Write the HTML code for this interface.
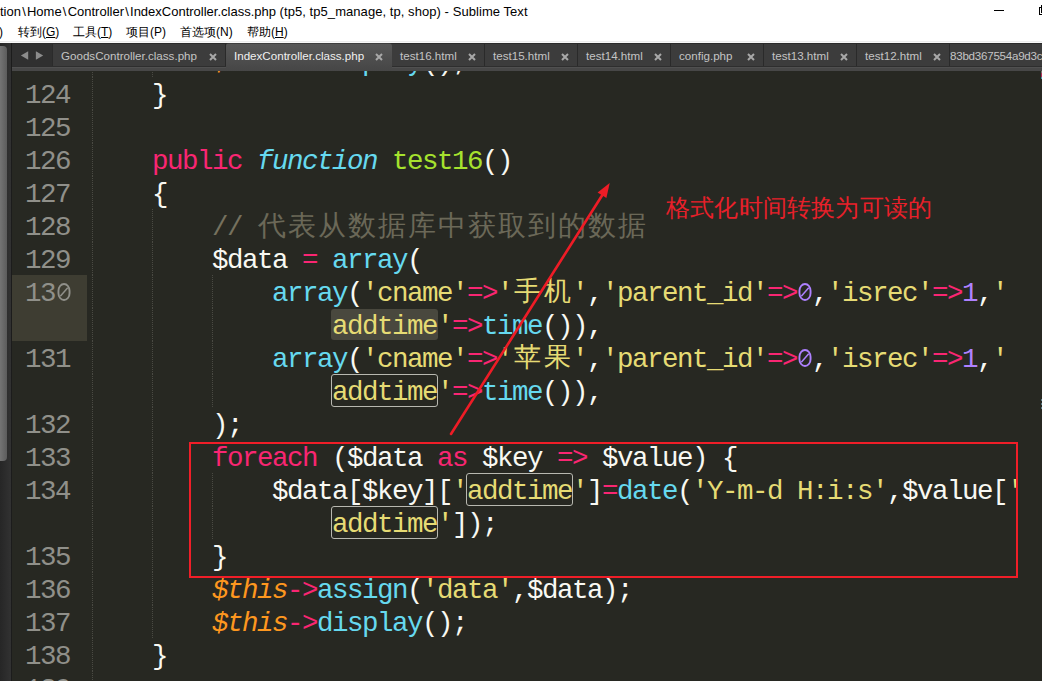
<!DOCTYPE html>
<html><head><meta charset="utf-8">
<style>
html,body{margin:0;padding:0;}
body{width:1042px;height:681px;overflow:hidden;position:relative;background:#fff;font-family:"Liberation Sans",sans-serif;}
.title{position:absolute;top:3px;font-size:13px;color:#000;white-space:pre;line-height:18px;}
.bs{font-weight:normal;padding:0 1.2px;}
.menu{position:absolute;top:23px;font-size:12px;color:#000;white-space:pre;line-height:18px;}
.menu u{text-decoration:underline;}
.wmin{position:absolute;left:994px;top:10px;width:10px;height:1px;background:#000;}
.wmax{position:absolute;left:1039px;top:7px;width:9px;height:8px;border:1px solid #000;box-sizing:border-box;}
.wmax2{position:absolute;left:1041px;top:5px;width:9px;height:8px;border-top:1px solid #000;border-left:1px solid #000;box-sizing:border-box;}
.topline{position:absolute;left:0;top:41px;width:1042px;height:2px;background:linear-gradient(180deg,#ececec 0,#ececec 1px,#f8f8f8 1px);}
.side{position:absolute;left:0;top:43px;width:12px;height:638px;background:linear-gradient(90deg,#262626,#333);}
.sideline{position:absolute;left:11px;top:43px;width:1px;height:638px;background:#1c1c1c;}
.thumb{position:absolute;left:0;top:46px;width:7px;height:415px;background:linear-gradient(90deg,#747474,#5c5c5c);border-radius:0 4px 4px 0;}
.tabbar{position:absolute;left:12px;top:43px;width:1030px;height:23px;background:#2b2b2b;}
.strip{position:absolute;left:12px;top:66px;width:1030px;height:5px;background:linear-gradient(180deg,#2e2e2e 0,#2e2e2e 1px,#505050 1px,#505050 2px,#474747 2px);}
.arrows{position:absolute;left:12px;top:44px;width:40px;height:22px;background:#303030;}
.tab{position:absolute;top:44px;height:22px;background:#3c3c3c;box-sizing:border-box;border-right:1px solid #2a2a2a;font-size:11.6px;color:#c4c4c4;white-space:nowrap;overflow:hidden;}
.tab.act{background:linear-gradient(180deg,#3e3e3e 0,#3e3e3e 1px,#575757 1px,#464646);top:43px;height:28px;color:#f0f0f0;border-right:none;border-radius:3px 3px 0 0;z-index:2;}
.tab.act .tl{top:6px;} .tab.act .x{top:9.5px;right:9.5px;}
.tl{position:absolute;left:8px;top:5px;line-height:14px;}
.x{position:absolute;right:8px;top:8.5px;}
.editor{position:absolute;left:12px;top:71px;width:1030px;height:610px;background:#272822;overflow:hidden;}
.ed{position:absolute;left:-12px;top:-71px;width:1042px;height:681px;}
.gh{position:absolute;left:12px;top:275px;width:75px;height:66px;background:#3e3d32;}
.ln{position:absolute;left:12px;width:58px;text-align:right;font-family:"Liberation Mono",monospace;font-size:27.5px;letter-spacing:-1.5px;line-height:33px;color:#90908a;white-space:pre;}
.gd{position:absolute;width:1px;height:33px;background:repeating-linear-gradient(180deg,#4a4a43 0,#4a4a43 1px,transparent 1px,transparent 2px);}
.t{position:absolute;font-family:"Liberation Mono",monospace;font-size:27.5px;letter-spacing:-1.5px;line-height:33px;white-space:pre;}
.cj{position:absolute;font-size:27px;line-height:33px;text-align:center;white-space:pre;margin-top:-2px;font-weight:300;}
.cj.c{font-family:"Liberation Serif",serif;font-size:28px;font-weight:400;color:#6b6858;}
.k{color:#f92672;} .f{color:#66d9ef;} .fi{color:#66d9ef;font-style:italic;} .g{color:#a6e22e;}
.s{color:#e6db74;} .n{color:#ae81ff;} .w{color:#f8f8f2;} .c{color:#75715e;} .o{color:#fd971f;font-style:italic;}
.z{position:absolute;}
.sel{position:absolute;height:31px;background:#49483e;border-radius:3px;}
.box{position:absolute;height:33px;border:1px solid #b8b8b0;border-radius:3px;box-sizing:border-box;}
.anno{position:absolute;left:666px;top:194px;font-size:24px;letter-spacing:0.2px;line-height:28px;color:#e8202a;white-space:pre;}
.rect{position:absolute;left:189px;top:442px;width:829px;height:136px;border:2px solid #f01e28;box-sizing:border-box;}
</style></head><body>
<div class="title" style="left:0px">tion<b class="bs">\</b>Home<b class="bs">\</b>Controller<b class="bs">\</b>IndexController.class.php <span style="letter-spacing:0.06px">(tp5, tp5_manage, tp, shop) - Sublime Text</span></div>
<div class="menu" style="left:-1px">)</div>
<div class="menu" style="left:18px">转到(<u>G</u>)</div>
<div class="menu" style="left:73px">工具(<u>T</u>)</div>
<div class="menu" style="left:126px">项目(P)</div>
<div class="menu" style="left:180px">首选项(N)</div>
<div class="menu" style="left:247px">帮助(<u>H</u>)</div>
<div class="wmin"></div><div class="wmax"></div><div class="wmax2"></div>
<div class="topline"></div>
<div class="editor"><div class="ed">
<div class="gh"></div>
<div class="gd" style="left:92px;top:44px"></div>
<div class="gd" style="left:152px;top:44px"></div>
<div class="ln" style="top:46px">123</div>
<span class="t o" style="left:212.0px;top:46px">$this</span>
<span class="t k" style="left:287.0px;top:46px">-&gt;</span>
<span class="t f" style="left:317.0px;top:46px">display</span>
<span class="t w" style="left:422.0px;top:46px">();</span>
<div class="gd" style="left:92px;top:77px"></div>
<div class="ln" style="top:79px">124</div>
<span class="t w" style="left:152.0px;top:79px">}</span>
<div class="gd" style="left:92px;top:110px"></div>
<div class="ln" style="top:112px">125</div>
<div class="gd" style="left:92px;top:143px"></div>
<div class="ln" style="top:145px">126</div>
<span class="t k" style="left:152.0px;top:145px">public</span>
<span class="t w" style="left:242.0px;top:145px"> </span>
<span class="t fi" style="left:257.0px;top:145px">function</span>
<span class="t w" style="left:377.0px;top:145px"> </span>
<span class="t g" style="left:392.0px;top:145px">test16</span>
<span class="t w" style="left:482.0px;top:145px">()</span>
<div class="gd" style="left:92px;top:176px"></div>
<div class="ln" style="top:178px">127</div>
<span class="t w" style="left:152.0px;top:178px">{</span>
<div class="gd" style="left:92px;top:209px"></div>
<div class="gd" style="left:152px;top:209px"></div>
<div class="ln" style="top:211px">128</div>
<span class="t c" style="left:212.0px;top:211px">// </span>
<span class="cj c" style="left:257.0px;top:211px;width:30px">代</span>
<span class="cj c" style="left:287.0px;top:211px;width:30px">表</span>
<span class="cj c" style="left:317.0px;top:211px;width:30px">从</span>
<span class="cj c" style="left:347.0px;top:211px;width:30px">数</span>
<span class="cj c" style="left:377.0px;top:211px;width:30px">据</span>
<span class="cj c" style="left:407.0px;top:211px;width:30px">库</span>
<span class="cj c" style="left:437.0px;top:211px;width:30px">中</span>
<span class="cj c" style="left:467.0px;top:211px;width:30px">获</span>
<span class="cj c" style="left:497.0px;top:211px;width:30px">取</span>
<span class="cj c" style="left:527.0px;top:211px;width:30px">到</span>
<span class="cj c" style="left:557.0px;top:211px;width:30px">的</span>
<span class="cj c" style="left:587.0px;top:211px;width:30px">数</span>
<span class="cj c" style="left:617.0px;top:211px;width:30px">据</span>
<div class="gd" style="left:92px;top:242px"></div>
<div class="gd" style="left:152px;top:242px"></div>
<div class="ln" style="top:244px">129</div>
<span class="t w" style="left:212.0px;top:244px">$data </span>
<span class="t k" style="left:302.0px;top:244px">=</span>
<span class="t w" style="left:317.0px;top:244px"> </span>
<span class="t f" style="left:332.0px;top:244px">array</span>
<span class="t w" style="left:407.0px;top:244px">(</span>
<div class="gd" style="left:92px;top:275px"></div>
<div class="gd" style="left:152px;top:275px"></div>
<div class="gd" style="left:212px;top:275px"></div>
<div class="ln" style="top:277px">13 </div>
<svg class="z" style="left:55.70px;top:280.85px" width="16" height="22"><rect x="2.45" y="3" width="11.1" height="16" rx="5.55" ry="6.8" fill="none" stroke="#90908a" stroke-width="1.9"/><line x1="4.3" y1="15.2" x2="11.7" y2="6.8" stroke="#90908a" stroke-width="1.5"/></svg>
<span class="t f" style="left:272.0px;top:277px">array</span>
<span class="t w" style="left:347.0px;top:277px">(</span>
<span class="t s" style="left:362.0px;top:277px">&#x27;cname&#x27;</span>
<span class="t k" style="left:467.0px;top:277px">=&gt;</span>
<span class="t s" style="left:497.0px;top:277px">&#x27;</span>
<span class="cj s" style="left:512.0px;top:277px;width:30px">手</span>
<span class="cj s" style="left:542.0px;top:277px;width:30px">机</span>
<span class="t s" style="left:572.0px;top:277px">&#x27;</span>
<span class="t w" style="left:587.0px;top:277px">,</span>
<span class="t s" style="left:602.0px;top:277px">&#x27;parent_id&#x27;</span>
<span class="t k" style="left:767.0px;top:277px">=&gt;</span>
<svg class="z" style="left:796.70px;top:281.00px" width="16" height="22"><rect x="2.45" y="3" width="11.1" height="16" rx="5.55" ry="6.8" fill="none" stroke="#ae81ff" stroke-width="1.9"/><line x1="4.3" y1="15.2" x2="11.7" y2="6.8" stroke="#ae81ff" stroke-width="1.5"/></svg>
<span class="t w" style="left:812.0px;top:277px">,</span>
<span class="t s" style="left:827.0px;top:277px">&#x27;isrec&#x27;</span>
<span class="t k" style="left:932.0px;top:277px">=&gt;</span>
<span class="t n" style="left:962.0px;top:277px">1</span>
<span class="t w" style="left:977.0px;top:277px">,</span>
<span class="t s" style="left:992.0px;top:277px">&#x27;</span>
<div class="gd" style="left:92px;top:308px"></div>
<div class="gd" style="left:152px;top:308px"></div>
<div class="gd" style="left:212px;top:308px"></div>
<div class="sel" style="left:331.0px;top:309px;width:107.0px"></div>
<span class="t s" style="left:332.0px;top:310px">addtime</span>
<span class="t s" style="left:437.0px;top:310px">&#x27;</span>
<span class="t k" style="left:452.0px;top:310px">=&gt;</span>
<span class="t f" style="left:482.0px;top:310px">time</span>
<span class="t w" style="left:542.0px;top:310px">()),</span>
<div class="gd" style="left:92px;top:341px"></div>
<div class="gd" style="left:152px;top:341px"></div>
<div class="gd" style="left:212px;top:341px"></div>
<div class="ln" style="top:343px">131</div>
<span class="t f" style="left:272.0px;top:343px">array</span>
<span class="t w" style="left:347.0px;top:343px">(</span>
<span class="t s" style="left:362.0px;top:343px">&#x27;cname&#x27;</span>
<span class="t k" style="left:467.0px;top:343px">=&gt;</span>
<span class="t s" style="left:497.0px;top:343px">&#x27;</span>
<span class="cj s" style="left:512.0px;top:343px;width:30px">苹</span>
<span class="cj s" style="left:542.0px;top:343px;width:30px">果</span>
<span class="t s" style="left:572.0px;top:343px">&#x27;</span>
<span class="t w" style="left:587.0px;top:343px">,</span>
<span class="t s" style="left:602.0px;top:343px">&#x27;parent_id&#x27;</span>
<span class="t k" style="left:767.0px;top:343px">=&gt;</span>
<svg class="z" style="left:796.70px;top:347.00px" width="16" height="22"><rect x="2.45" y="3" width="11.1" height="16" rx="5.55" ry="6.8" fill="none" stroke="#ae81ff" stroke-width="1.9"/><line x1="4.3" y1="15.2" x2="11.7" y2="6.8" stroke="#ae81ff" stroke-width="1.5"/></svg>
<span class="t w" style="left:812.0px;top:343px">,</span>
<span class="t s" style="left:827.0px;top:343px">&#x27;isrec&#x27;</span>
<span class="t k" style="left:932.0px;top:343px">=&gt;</span>
<span class="t n" style="left:962.0px;top:343px">1</span>
<span class="t w" style="left:977.0px;top:343px">,</span>
<span class="t s" style="left:992.0px;top:343px">&#x27;</span>
<div class="gd" style="left:92px;top:374px"></div>
<div class="gd" style="left:152px;top:374px"></div>
<div class="gd" style="left:212px;top:374px"></div>
<div class="box" style="left:331.0px;top:374px;width:107.0px"></div>
<span class="t s" style="left:332.0px;top:376px">addtime</span>
<span class="t s" style="left:437.0px;top:376px">&#x27;</span>
<span class="t k" style="left:452.0px;top:376px">=&gt;</span>
<span class="t f" style="left:482.0px;top:376px">time</span>
<span class="t w" style="left:542.0px;top:376px">()),</span>
<div class="gd" style="left:92px;top:407px"></div>
<div class="gd" style="left:152px;top:407px"></div>
<div class="ln" style="top:409px">132</div>
<span class="t w" style="left:212.0px;top:409px">);</span>
<div class="gd" style="left:92px;top:440px"></div>
<div class="gd" style="left:152px;top:440px"></div>
<div class="ln" style="top:442px">133</div>
<span class="t k" style="left:212.0px;top:442px">foreach</span>
<span class="t w" style="left:317.0px;top:442px"> ($data </span>
<span class="t k" style="left:437.0px;top:442px">as</span>
<span class="t w" style="left:467.0px;top:442px"> $key </span>
<span class="t k" style="left:557.0px;top:442px">=&gt;</span>
<span class="t w" style="left:587.0px;top:442px"> $value) {</span>
<div class="gd" style="left:92px;top:473px"></div>
<div class="gd" style="left:152px;top:473px"></div>
<div class="gd" style="left:212px;top:473px"></div>
<div class="ln" style="top:475px">134</div>
<span class="t w" style="left:272.0px;top:475px">$data[$key][</span>
<span class="t s" style="left:452.0px;top:475px">&#x27;</span>
<div class="box" style="left:466.0px;top:473px;width:107.0px"></div>
<span class="t s" style="left:467.0px;top:475px">addtime</span>
<span class="t s" style="left:572.0px;top:475px">&#x27;</span>
<span class="t w" style="left:587.0px;top:475px">]</span>
<span class="t k" style="left:602.0px;top:475px">=</span>
<span class="t f" style="left:617.0px;top:475px">date</span>
<span class="t w" style="left:677.0px;top:475px">(</span>
<span class="t s" style="left:692.0px;top:475px">&#x27;Y-m-d H:i:s&#x27;</span>
<span class="t w" style="left:887.0px;top:475px">,$value[</span>
<span class="t s" style="left:1007.0px;top:475px">&#x27;</span>
<div class="gd" style="left:92px;top:506px"></div>
<div class="gd" style="left:152px;top:506px"></div>
<div class="gd" style="left:212px;top:506px"></div>
<div class="box" style="left:331.0px;top:506px;width:107.0px"></div>
<span class="t s" style="left:332.0px;top:508px">addtime</span>
<span class="t s" style="left:437.0px;top:508px">&#x27;</span>
<span class="t w" style="left:452.0px;top:508px">]);</span>
<div class="gd" style="left:92px;top:539px"></div>
<div class="gd" style="left:152px;top:539px"></div>
<div class="ln" style="top:541px">135</div>
<span class="t w" style="left:212.0px;top:541px">}</span>
<div class="gd" style="left:92px;top:572px"></div>
<div class="gd" style="left:152px;top:572px"></div>
<div class="ln" style="top:574px">136</div>
<span class="t o" style="left:212.0px;top:574px">$this</span>
<span class="t k" style="left:287.0px;top:574px">-&gt;</span>
<span class="t f" style="left:317.0px;top:574px">assign</span>
<span class="t w" style="left:407.0px;top:574px">(</span>
<span class="t s" style="left:422.0px;top:574px">&#x27;data&#x27;</span>
<span class="t w" style="left:512.0px;top:574px">,$data);</span>
<div class="gd" style="left:92px;top:605px"></div>
<div class="gd" style="left:152px;top:605px"></div>
<div class="ln" style="top:607px">137</div>
<span class="t o" style="left:212.0px;top:607px">$this</span>
<span class="t k" style="left:287.0px;top:607px">-&gt;</span>
<span class="t f" style="left:317.0px;top:607px">display</span>
<span class="t w" style="left:422.0px;top:607px">();</span>
<div class="gd" style="left:92px;top:638px"></div>
<div class="ln" style="top:640px">138</div>
<span class="t w" style="left:152.0px;top:640px">}</span>
<div class="gd" style="left:92px;top:671px"></div>
<div class="ln" style="top:673px">139</div>
<div class="anno">格式化时间转换为可读的</div>
<div class="rect"></div>
<div style="position:absolute;left:1041px;top:71px;width:1px;height:2px;background:#7a7a70"></div><div style="position:absolute;left:1041px;top:73px;width:1px;height:4px;background:#b0305a"></div><div style="position:absolute;left:1041px;top:77px;width:1px;height:2px;background:#4a9aaa"></div>
<div style="position:absolute;left:1041px;top:399px;width:1px;height:10px;background:repeating-linear-gradient(180deg,#5a7a85 0,#5a7a85 2px,transparent 2px,transparent 4px)"></div>
<svg style="position:absolute;left:0;top:0" width="1042" height="681"><line x1="451" y1="434" x2="603" y2="194" stroke="#ee1c26" stroke-width="2.6" stroke-linecap="round"/><polygon points="609.7,183 597.6,192.4 606.4,197.9" fill="#ee1c26"/></svg>
</div></div>
<div class="side"></div><div class="thumb"></div><div class="sideline"></div>
<div class="tabbar"></div>
<div class="arrows"><svg style="position:absolute;left:0;top:0" width="40" height="22"><polygon points="8.9,11.5 16.2,7.2 16.2,15.8" fill="#8c8c8c"/><polygon points="23.9,7.2 23.9,15.8 31.2,11.5" fill="#8c8c8c"/></svg></div>
<div class="tab" style="left:53px;width:173px"><span class="tl">GoodsController.class.php</span><svg class="x" width="8" height="8"><path d="M1 1L7 7M7 1L1 7" stroke="#a8a8a8" stroke-width="2"/></svg></div>
<div class="tab act" style="left:226px;width:166px"><span class="tl">IndexController.class.php</span><svg class="x" width="8" height="8"><path d="M1 1L7 7M7 1L1 7" stroke="#a8a8a8" stroke-width="2"/></svg></div>
<div class="tab" style="left:392px;width:93px"><span class="tl">test16.html</span><svg class="x" width="8" height="8"><path d="M1 1L7 7M7 1L1 7" stroke="#a8a8a8" stroke-width="2"/></svg></div>
<div class="tab" style="left:485px;width:93px"><span class="tl">test15.html</span><svg class="x" width="8" height="8"><path d="M1 1L7 7M7 1L1 7" stroke="#a8a8a8" stroke-width="2"/></svg></div>
<div class="tab" style="left:578px;width:93px"><span class="tl">test14.html</span><svg class="x" width="8" height="8"><path d="M1 1L7 7M7 1L1 7" stroke="#a8a8a8" stroke-width="2"/></svg></div>
<div class="tab" style="left:671px;width:93px"><span class="tl">config.php</span><svg class="x" width="8" height="8"><path d="M1 1L7 7M7 1L1 7" stroke="#a8a8a8" stroke-width="2"/></svg></div>
<div class="tab" style="left:764px;width:93px"><span class="tl">test13.html</span><svg class="x" width="8" height="8"><path d="M1 1L7 7M7 1L1 7" stroke="#a8a8a8" stroke-width="2"/></svg></div>
<div class="tab" style="left:857px;width:93px"><span class="tl">test12.html</span><svg class="x" width="8" height="8"><path d="M1 1L7 7M7 1L1 7" stroke="#a8a8a8" stroke-width="2"/></svg></div>
<div class="tab" style="left:950px;width:151px"><span class="tl" style="left:0px;letter-spacing:-0.25px">83bd367554a9d3c</span></div>
<div class="strip"></div>
</body></html>
